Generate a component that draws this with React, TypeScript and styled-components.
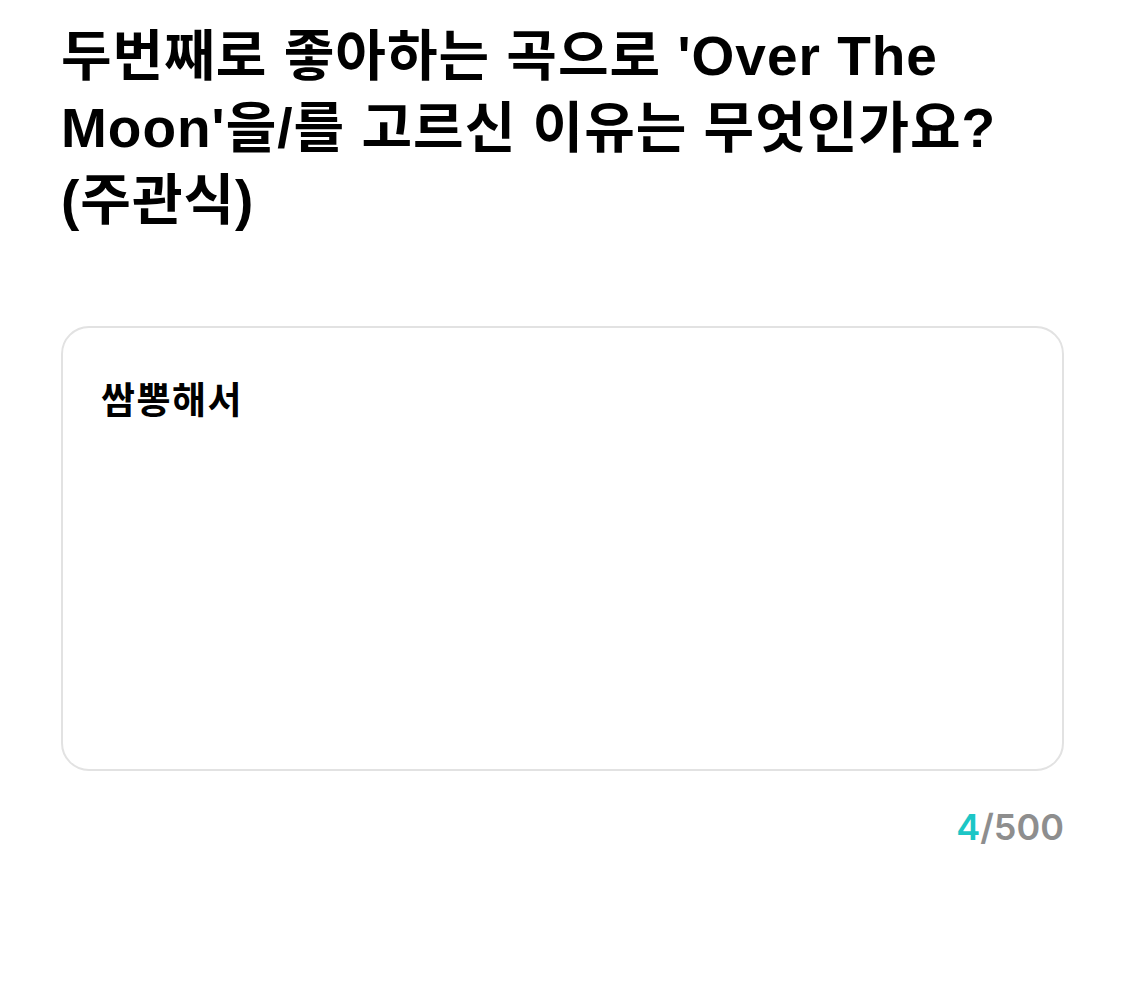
import styled, { createGlobalStyle } from "styled-components";
import React, { useState } from "react";

const GlobalStyle = createGlobalStyle`
    body {
        margin: 0;
        background: #ffffff;
        font-family: "Liberation Sans", "Noto Sans CJK KR", sans-serif;
    }
`;

const Page = styled.div`
    width: 100%;
    padding: 20px 61px 0px 61px;
    box-sizing: border-box;
`;

const Question = styled.h1`
    margin: 0;
    font-family: "Liberation Sans", "Noto Sans CJK KR", sans-serif;
    font-size: 55px;
    line-height: 72px;
    font-weight: 700;
    color: #000;
    letter-spacing: 1px;
    word-break: keep-all;
`;

const AnswerBox = styled.textarea`
    display: block;
    width: 100%;
    height: 445px;
    margin-top: 90px;
    box-sizing: border-box;
    padding: 44px 38px;
    border: 2px solid #e2e2e2;
    border-radius: 28px;
    resize: none;
    outline: none;
    font-family: "Noto Sans CJK KR", sans-serif;
    font-size: 37px;
    font-weight: 700;
    line-height: 52px;
    letter-spacing: 1.5px;
    color: #000;
`;

const Counter = styled.div`
    display: flex;
    justify-content: flex-end;
    margin-top: 34px;
    font-family: "Inter", "Noto Sans", sans-serif;
    font-size: 36px;
    font-weight: 600;
    color: #8e8e8e;
`;

const Count = styled.span<{ $active: boolean }>`
    color: ${(p) => (p.$active ? "#1cc6c6" : "#8e8e8e")};
`;

const MAX = 500;

function App() {
    const [answer, setAnswer] = useState("쌈뽕해서");
    return (
        <>
            <GlobalStyle />
            <Page>
                <Question>
                    두번째로 좋아하는 곡으로 'Over The Moon'을/를 고르신 이유는 무엇인가요? (주관식)
                </Question>
                <AnswerBox
                    value={answer}
                    maxLength={MAX}
                    onChange={(e) => setAnswer(e.target.value)}
                />
                <Counter>
                    <Count $active={answer.length > 0}>{answer.length}</Count>/{MAX}
                </Counter>
            </Page>
        </>
    );
}
export default App;
